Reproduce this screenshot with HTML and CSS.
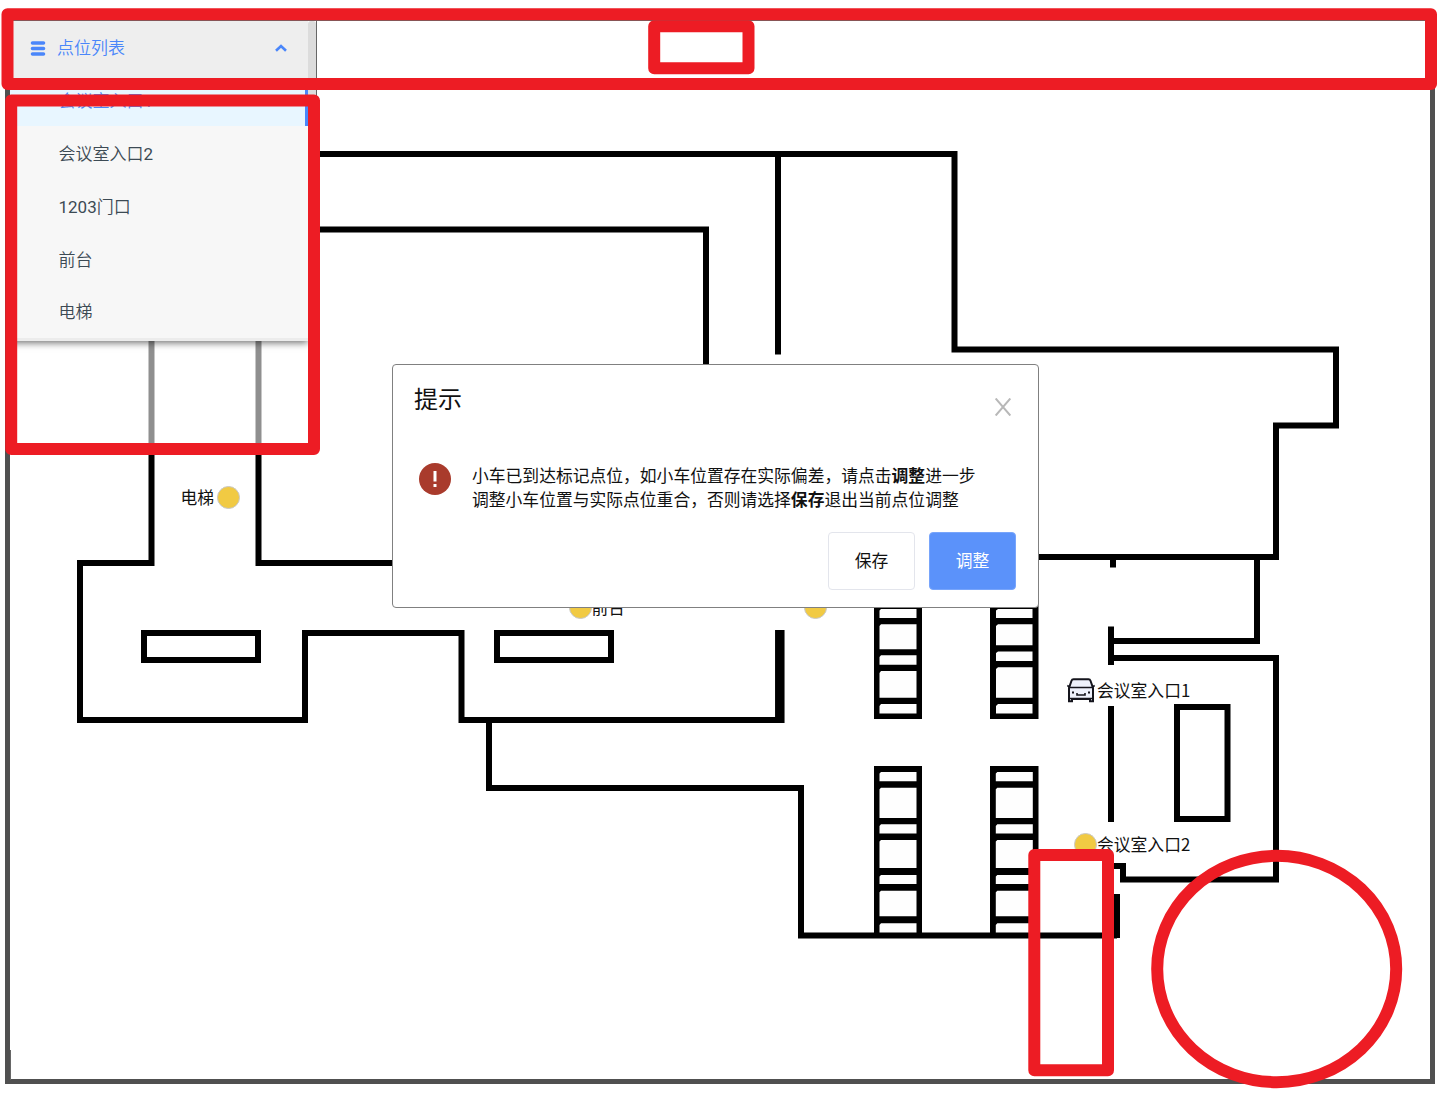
FILE: index.html
```html
<!DOCTYPE html>
<html lang="zh-CN">
<head>
<meta charset="utf-8">
<title>点位列表</title>
<link rel="stylesheet" href="styles.css">
</head>
<body>
<main class="stage">
  <svg class="map" viewBox="0 0 1439 1093" aria-hidden="true">
    <path class="frame-top" d="M10 20.5H1431M316.5 20V100"/>
    <path class="frame" d="M7.5 84V1081.5H1432.5V84"/>
    <path class="frame-top" d="M10.500 1050V1080"/>
    <g class="wall">
      <path d="M300 154H954.500V349.500H1336V425.500H1276V557H1000"/>
      <path d="M300 229.500H706V400M778 154V354.500"/>
      <path d="M151.500 330V563H80V720H305V633H461.500V720H780"/>
      <path d="M258.500 330V563H420M489 720V788H801V935.500H1117"/>
      <path d="M144 633H258V660H144ZM497 633H611V660H497Z"/>
      <path d="M1111 626.500V665M1111 641H1257V557M1111 658H1276V879.500H1123V866H1108M1111 706V822"/>
      <path d="M1113 557V567.500M1117 894V938M1177 707H1227.500V819H1177Z"/>
    </g>
    <path class="wall-thick" d="M779.800 630V723"/>
    <path class="ladder" d="M874 600H922V719H874ZM990 600H1038.500V719H990ZM874 766H922V938H874ZM990 766H1038.500V938H990Z"/>
    <g class="hole">
      <path d="M881 609H916.500V618H879.500V610.500ZM881 624.300H916.500V649.300H879.500V626ZM881 655.300H916.500V664.700H879.500V657ZM881 671H916.500V697.700H879.500V673ZM881 704H916.500V713.500H879.500V706Z"/>
      <path d="M998 609H1032.500V618H996V610.500ZM998 624.300H1032.500V645.300H996V626ZM998 651.600H1032.500V661H996V653ZM998 667.300H1032.500V697.700H996V669ZM998 704H1032.500V713.500H996V706Z"/>
      <path id="lower" d="M881 772H916.500V781.300H879.500V773.500ZM881 787.700H916.500V818H879.500V789.200ZM881 824.300H916.500V833.500H879.500V826ZM881 840H916.500V868H879.500V841.500ZM881 875H916.500V884H879.500V876.500ZM881 890.700H916.500V916.300H879.500V892.200ZM881 923.300H916.500V932.600H879.500V925Z"/>
      <use href="#lower" x="116.300"/>
    </g>
  </svg>

  <div class="marker marker-lift"><span class="label">电梯</span><i class="dot"></i></div>
  <div class="marker marker-desk"><i class="dot"></i><span class="label">前台</span></div>
  <div class="marker marker-door"><i class="dot"></i></div>
  <div class="marker marker-room1">
    <svg class="car" viewBox="0 0 28 25">
      <path class="car-body" d="M6.500 1.200H21.500Q23 1.200 23.500 2.700L26 10V23.300H23V21H5V23.300H2V10L4.500 2.700Q5 1.200 6.500 1.200Z"/>
      <path class="car-line" d="M2.500 9.500H25.500M.3 7.500L3 9.500M27.700 7.500L25 9.500M2 20.500H26M10 15V17H18V15"/>
      <path class="car-lamp" d="M5 13.500h2v2h-2zM21 13.500h2v2h-2z"/>
    </svg><span class="label">会议室入口1</span>
  </div>
  <div class="marker marker-room2"><i class="dot"></i><span class="label">会议室入口2</span></div>

  <aside class="panel">
    <header class="panel-head">
      <svg class="list-icon" viewBox="0 0 16 15"><path d="M2.500 2H13.500M2.500 7.500H13.500M2.500 13H13.500"/></svg>
      <span class="panel-title">点位列表</span>
      <svg class="chevron" viewBox="0 0 12 8"><path d="M1 6.800L6 2L11 6.800"/></svg>
    </header>
    <ul class="points">
      <li class="point active">会议室入口<span class="num">1</span></li>
      <li class="point">会议室入口<span class="num">2</span></li>
      <li class="point"><span class="num">1203</span>门口</li>
      <li class="point">前台</li>
      <li class="point">电梯</li>
    </ul>
    <div class="panel-rest"></div>
  </aside>
  <div class="scrollbar"></div>

  <section class="dialog" role="dialog">
    <header class="dialog-head">
      <h2 class="dialog-title">提示</h2>
      <svg class="close" viewBox="0 0 16 18"><path d="M.7.500L15.300 17.500M15.300.500L.7 17.500"/></svg>
    </header>
    <div class="dialog-body">
      <svg class="alert" viewBox="0 0 32 32"><circle cx="16" cy="16" r="16"/><path d="M14.500 8h3v10.500h-3zM14.500 21h3v3h-3z"/></svg>
      <p class="message">小车已到达标记点位，如小车位置存在实际偏差，请点击<b>调整</b>进一步<br>调整小车位置与实际点位重合，否则请选择<b>保存</b>退出当前点位调整</p>
    </div>
    <footer class="actions">
      <button class="button">保存</button>
      <button class="button primary">调整</button>
    </footer>
  </section>

  <svg class="marks" viewBox="0 0 1439 1093" aria-hidden="true">
    <rect x="7.500" y="14.300" width="1423.500" height="69.700"/>
    <rect x="11.200" y="100.500" width="302.800" height="348.500"/>
    <rect x="654.200" y="26.200" width="94.300" height="42"/>
    <rect x="1034.300" y="855" width="73.700" height="215.300"/>
    <ellipse cx="1276.700" cy="969" rx="119.500" ry="113.200"/>
  </svg>
</main>
</body>
</html>
```
FILE: styles.css
```css
* { box-sizing: border-box; }
body {
  margin: 0;
  background: #fff;
  color: #111;
  font-family: "Noto Sans CJK SC", sans-serif;
  font-size: 16.8px;
}
.stage {
  position: relative;
  width: 1439px;
  height: 1093px;
  overflow: hidden;
}
.map, .marks {
  position: absolute;
  inset: 0;
  width: 1439px;
  height: 1093px;
}
.map { fill: none; }
.frame { stroke: #505050; stroke-width: 5; }
.frame-top { stroke: #666; stroke-width: 1; }
.wall { stroke: #000; stroke-width: 6; }
.wall-thick { stroke: #000; stroke-width: 9.5; }
.ladder { fill: #000; }
.hole { fill: #fefefe; }
.marks {
  fill: none;
  stroke: #ed1c24;
  stroke-width: 12;
  stroke-linejoin: round;
}

/* Points placed on the floor plan */
.marker {
  position: absolute;
  display: flex;
  align-items: center;
  height: 24px;
  line-height: 24px;
  white-space: nowrap;
}
.dot {
  width: 23px;
  height: 23px;
  border: 1px solid #c8c8c8;
  border-radius: 50%;
  background: #f1ca43;
}
.marker-lift { left: 180.5px; top: 485px; gap: 3px; }
.marker-desk { left: 568.5px; top: 595px; }
.marker-door { left: 804px; top: 595px; }
.marker-room1 { left: 1067px; top: 678px; gap: 2px; }
.marker-room2 { left: 1074px; top: 832px; }
.car { width: 28px; height: 25px; fill: none; }
.car-body { fill: #eef1fc; stroke: #15151d; stroke-width: 2; }
.car-line { stroke: #15151d; stroke-width: 1.6; }
.car-lamp { fill: #15151d; }

/* Point list */
.panel {
  position: absolute;
  left: 10px;
  top: 21px;
  width: 298px;
  height: 429px;
  display: flex;
  flex-direction: column;
  font-family: Roboto, "Noto Sans CJK SC", sans-serif;
  font-size: 17px;
  font-weight: 350;
  color: #3c4a54;
}
.panel-head {
  flex: none;
  display: flex;
  align-items: center;
  height: 57px;
  padding: 0 21px 3px 19.5px;
  background: #eee;
  color: #4a86fa;
}
.panel-title { margin-top: -3px; }
.list-icon { width: 16px; height: 15px; margin-right: 11.5px; }
.list-icon path, .chevron path {
  fill: none;
  stroke: #4a86fa;
  stroke-width: 3.6;
  stroke-linecap: round;
}
.chevron { width: 12px; height: 8px; margin-left: auto; }
.chevron path { stroke-width: 2.6; stroke-linecap: butt; }
.points {
  flex: none;
  height: 262.5px;
  margin: 0;
  padding: 0;
  list-style: none;
  background: #f7f7f7;
  border-bottom: 3px solid #ececec;
  box-shadow: 0 2px 7px rgba(0, 0, 0, .55);
  clip-path: inset(0 0 -12px 0);
}
.point {
  height: 52.82px;
  padding-left: 48.5px;
  line-height: 57.5px;
}
.point.active {
  height: 47.9px;
  line-height: 46px;
  background: #e8f6ff;
  border-right: 3px solid #4a86fa;
  color: #4a86fa;
}
.num { font-weight: 400; }
.panel-rest { flex: 1; background: rgba(255, 255, 255, .56); }
.scrollbar {
  position: absolute;
  left: 308px;
  top: 21px;
  width: 8px;
  height: 75px;
  border-radius: 3px 3px 0 0;
  background: #dcdcdc;
}

/* Confirmation dialog */
.dialog {
  position: absolute;
  left: 392px;
  top: 364px;
  width: 647px;
  height: 244px;
  padding: 16px 22px 17px 21px;
  display: flex;
  flex-direction: column;
  border: 1px solid #808080;
  border-radius: 4px;
  background: #fff;
}
.dialog-head {
  flex: none;
  display: flex;
  justify-content: space-between;
  height: 82px;
}
.dialog-title {
  margin: 0;
  font-size: 24px;
  font-weight: 400;
  line-height: 34px;
}
.close {
  width: 16px;
  height: 18px;
  margin: 17px 5px 0 0;
  fill: none;
  stroke: #b8b8b8;
  stroke-width: 2;
}
.dialog-body { flex: none; display: flex; height: 68.5px; }
.alert { width: 32px; height: 32px; margin: 0 21px 0 5px; fill: #a93b2c; }
.alert path { fill: #fff; }
.message { margin: 0; line-height: 24px; white-space: nowrap; }
.message b { font-weight: 700; }
.actions { display: flex; justify-content: flex-end; gap: 14px; }
.button {
  width: 87px;
  height: 58px;
  padding: 0 0 2px;
  border: 1px solid #e3e5ec;
  border-radius: 4px;
  background: #fff;
  color: #111;
  font: 400 16.8px "Noto Sans CJK SC", sans-serif;
}
.button.primary { background: #5b92fa; border-color: #78a5fb; color: #fff; }
```
